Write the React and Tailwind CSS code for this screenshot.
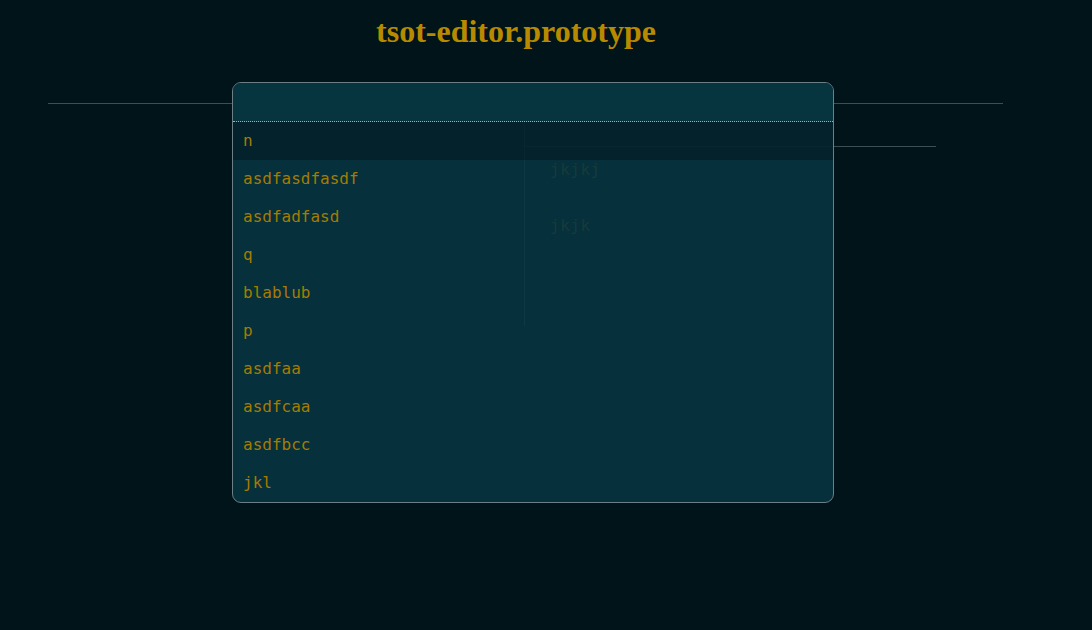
const items = [
  "n",
  "asdfasdfasdf",
  "asdfadfasd",
  "q",
  "blablub",
  "p",
  "asdfaa",
  "asdfcaa",
  "asdfbcc",
  "jkl",
];

export default function App() {
  return (
    <div className="relative min-h-[630px] w-full bg-[#00141a] font-['DejaVu_Sans_Mono',monospace]">
      <div className="flex justify-center pt-[11px] pr-[60px]">
        <h1 className="font-['Liberation_Serif',serif] text-[32px] font-bold leading-[40px] text-[#b88a00]">
          tsot-editor.prototype
        </h1>
      </div>

      {/* page behind the picker */}
      <div className="ml-[48px] mt-[52px] w-[955px] border-t border-[#3d4f53]">
        <div className="flex pt-[18px]">
          <div className="h-[204px] w-[477px] border-r border-[#3d4f53]"></div>
          <div className="w-[411px] pt-[24px]">
            <div className="border-t border-[#3d4f53]"></div>
            <div className="pl-[25px] pt-[13px] text-[16px] leading-[20px] tracking-[0.5px] text-[#b58900]/60">
              <div>jkjkj</div>
              <div className="mt-[36px]">jkjk</div>
            </div>
          </div>
        </div>
      </div>

      {/* picker overlay */}
      <div className="absolute left-[232px] top-[82px] w-[602px] overflow-hidden rounded-[9px] border border-[#6b7f84] bg-[#073642]/[0.86]">
        <div className="h-[39px] border-b border-dotted border-[#9fb0b4] bg-[#07353f]"></div>
        <ul>
          {items.map((item, i) => (
            <li
              key={item}
              className={`flex h-[38px] items-center px-[10px] text-[16px] text-[#a47c00] ${
                i === 0 ? "bg-[#00141a]/50" : ""
              }`}
            >
              {item}
            </li>
          ))}
        </ul>
      </div>
    </div>
  );
}
